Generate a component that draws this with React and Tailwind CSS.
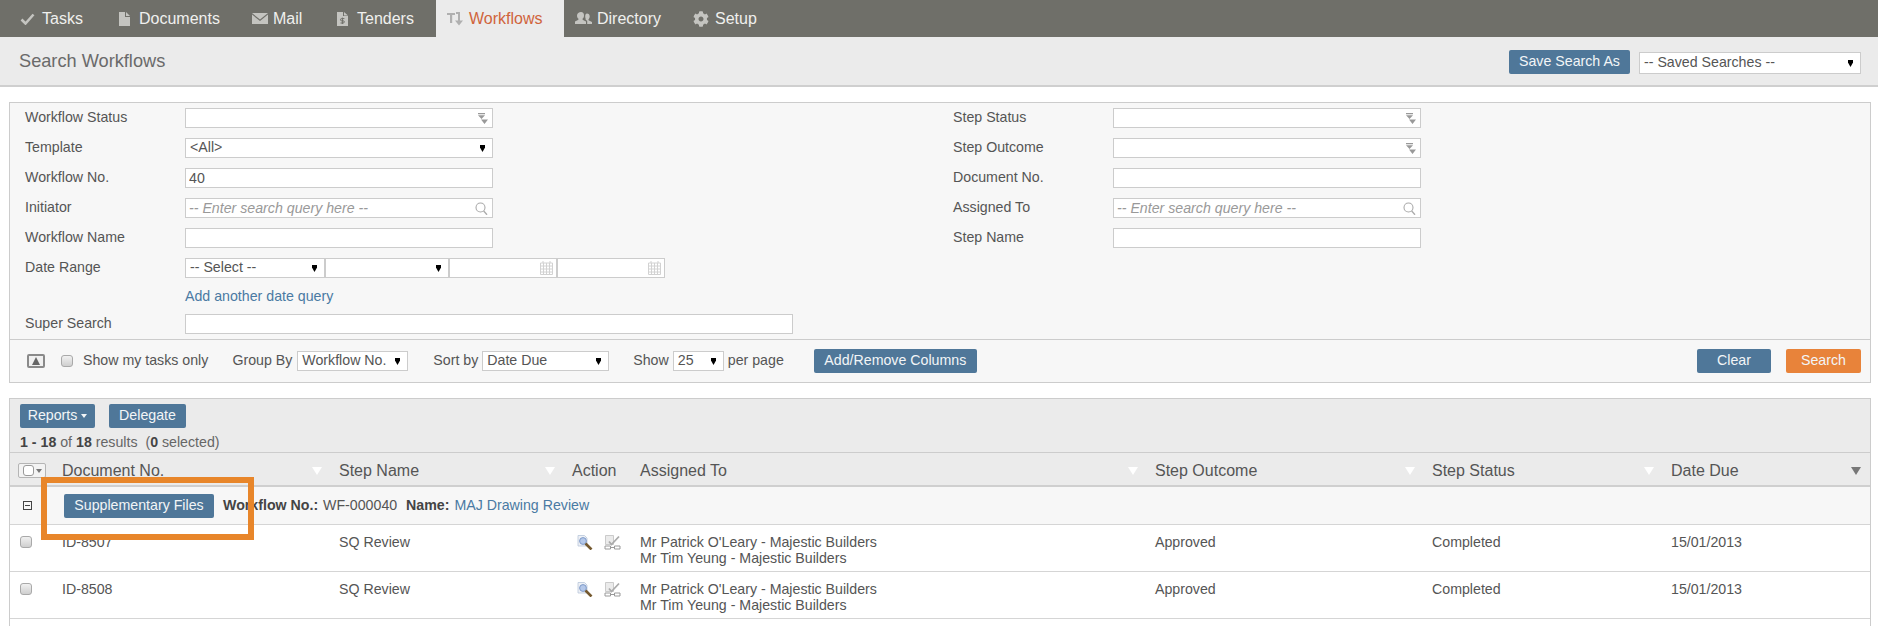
import { FaCog } from "react-icons/fa";

const tabs = [
  { name: "Tasks", icon: "check", width: "w-[99px]", gap: "gap-[7px]" },
  { name: "Documents", icon: "doc", width: "w-[133px]", gap: "gap-[9px]" },
  { name: "Mail", icon: "mail", width: "w-[85px]", gap: "gap-[5px]" },
  { name: "Tenders", icon: "tender", width: "w-[110px]", gap: "gap-[9px]" },
  { name: "Workflows", icon: "flow", width: "w-[128px]", gap: "gap-[6px]", active: true },
  { name: "Directory", icon: "people", width: "w-[118px]", gap: "gap-[5px]" },
  { name: "Setup", icon: "gear", width: "w-[95px]", gap: "gap-[6px]" },
];

function TabIcon({ type }) {
  if (type === "check")
    return (
      <svg width="15" height="12" viewBox="0 0 15 12" className="text-[#c4c4c0]">
        <path d="M1.5 6.5 5.5 10.5 13.5 1.5" fill="none" stroke="currentColor" strokeWidth="2.6" />
      </svg>
    );
  if (type === "doc")
    return (
      <svg width="11" height="14" viewBox="0 0 11 14" className="text-[#c4c4c0]">
        <path d="M0 0h6v5h5v9H0z M7 0l4 4H7z" fill="currentColor" />
      </svg>
    );
  if (type === "mail")
    return (
      <svg width="16" height="11" viewBox="0 0 16 11" className="text-[#c4c4c0]">
        <path d="M0 0h16L8 6.5z M0 1.6 8 8l8-6.4V11H0z" fill="currentColor" />
      </svg>
    );
  if (type === "tender")
    return (
      <svg width="11" height="14" viewBox="0 0 11 14" className="text-[#c4c4c0]">
        <path d="M0 0h6v4h5v10H0z M7 0l4 3.4H7z" fill="currentColor" />
        <path d="M7.4 6.6H4.6a1 1 0 0 0 0 2.2h1.6a1 1 0 0 1 0 2.2H3.5M5.4 5.6v6.4" fill="none" stroke="#6f6f69" strokeWidth="1" />
      </svg>
    );
  if (type === "flow")
    return (
      <svg width="16" height="15" viewBox="0 0 16 15" className="text-[#b0b0b0]">
        <path d="M0 2h8v2H5.2v8H3V4H0z M9 1h4v8.500h3L12 14.500l-4-5h3V3H9z" fill="currentColor" />
      </svg>
    );
  if (type === "people")
    return (
      <svg width="17" height="13" viewBox="0 0 17 13" className="text-[#c4c4c0]">
        <path d="M6 0c2 0 3 1.5 3 3.4 0 1.4-.6 2.6-1.4 3.2v1.2l3.4 1.7V12H0V9.500l3.400-1.700V6.600C2.600 6 2 4.800 2 3.400 2 1.500 4 0 6 0z" fill="currentColor" />
        <path d="M12 1.500c1.700 0 2.700 1.300 2.700 3 0 1.200-.5 2.200-1.200 2.800v1l3.500 1.700V12h-4.800V8.800l-1.500-.8V6.900c-.3-.600-.5-1.500-.5-2.400 0-1.700.6-3 1.800-3z" fill="currentColor" />
      </svg>
    );
  return <FaCog className="text-[#c4c4c0] w-[16px] h-[16px]" />;
}

function Arrow({ className = "text-black" }) {
  return (
    <svg width="5" height="7" viewBox="0 0 5 7" className={className}>
      <path d="M0 0h5v2.500L2.500 7 0 2.500z" fill="currentColor" />
    </svg>
  );
}

function SortArrow({ className = "text-white" }) {
  return (
    <svg width="10" height="8" viewBox="0 0 10 8" className={className}>
      <path d="M0 0h10L5 8z" fill="currentColor" />
    </svg>
  );
}

function TextBox({ value = "", placeholder, className = "w-[308px]", children }) {
  return (
    <div className={`relative h-[20px] ${className}`}>
      <input
        readOnly
        value={value}
        placeholder={placeholder}
        className="w-full h-full bg-white border border-[#cccccc] px-[3px] text-[14.2px] text-[#555] outline-none placeholder:italic placeholder:text-[#999]"
      />
      {children}
    </div>
  );
}

function Dropdown({ value, className = "w-[308px]", arrowRight = "pr-[7px]" }) {
  return (
    <div className={`h-[20px] bg-white border border-[#cccccc] flex items-center justify-between pl-[4px] ${arrowRight} text-[14.2px] text-[#555] ${className}`}>
      <span className="whitespace-nowrap">{value}</span>
      <Arrow />
    </div>
  );
}

function MultiBox() {
  return (
    <TextBox>
      <svg width="10" height="11" viewBox="0 0 10 11" className="absolute right-[5px] top-[5px] text-[#999]">
        <path d="M0 0h7v1.200H0z M0 2.200h7L3.500 6z M3 6.500h7L6.500 11z" fill="currentColor" />
      </svg>
    </TextBox>
  );
}

function SearchBox() {
  return (
    <TextBox placeholder="-- Enter search query here --">
      <svg width="13" height="13" viewBox="0 0 13 13" className="absolute right-[5px] top-[4px] text-[#aaa]">
        <circle cx="5.500" cy="5.500" r="4.500" fill="none" stroke="currentColor" strokeWidth="1.100" />
        <path d="M8.700 9 12 12.800" stroke="currentColor" strokeWidth="1.300" />
      </svg>
    </TextBox>
  );
}

function DateBox({ className }) {
  return (
    <TextBox className={className}>
      <svg width="13" height="14" viewBox="0 0 13 14" className="absolute right-[4px] top-[3px] text-[#d2d2d2]">
        <path d="M3 0v2M10 0v2M.5 2h12v11.500H.5zM.5 5h12M.5 8h12M.5 11h12M3.500 2v11.500M6.500 2v11.500M9.500 2v11.500" fill="none" stroke="currentColor" strokeWidth="1" />
      </svg>
    </TextBox>
  );
}

function FieldRow({ label, children }) {
  return (
    <div className="flex items-center h-[20px]">
      <span className="w-[160px] whitespace-nowrap">{label}</span>
      {children}
    </div>
  );
}

function Btn({ children, className = "bg-[#4f7799] px-[10px]" }) {
  return (
    <button className={`h-[24px] rounded-[2px] text-[#f2f5f7] text-[14.2px] whitespace-nowrap flex items-center justify-center ${className}`}>
      {children}
    </button>
  );
}

function Checkbox() {
  return <span className="block w-[12px] h-[12px] rounded-[3px] border border-[#a9a9a9] bg-gradient-to-b from-[#f1f1f1] to-[#cfcfcf]" />;
}

const headers = [
  { name: "Document No.", arrowPad: "pr-[17px]" },
  { name: "Step Name", arrowPad: "pr-[17px]" },
  { name: "Action" },
  { name: "Assigned To", arrowPad: "pr-[17px]" },
  { name: "Step Outcome", arrowPad: "pr-[17px]" },
  { name: "Step Status", arrowPad: "pr-[17px]" },
  { name: "Date Due", arrowPad: "pr-[9px]", dark: true },
];

const rows = [
  { id: "ID-8507" },
  { id: "ID-8508" },
];

const tableCols = "grid grid-cols-[52px_277px_233px_68px_515px_277px_239px_1fr]";

function RowIcons() {
  return (
    <div className="flex gap-[11px] pt-[1px]">
      <svg width="16" height="15" viewBox="0 0 16 15">
        <path d="M1 .5h6.500l2.500 2.500v8H1z" fill="#eef1f6" stroke="#b9c6da" strokeWidth="0.800" />
        <circle cx="6" cy="6" r="3.400" fill="#b4c8ea" stroke="#7f9ac8" strokeWidth="1" />
        <path d="M8.500 8.500 14.500 14.500" stroke="#75592f" strokeWidth="2.600" />
      </svg>
      <svg width="17" height="15" viewBox="0 0 17 15">
        <path d="M1.500.500h8v9h-8z" fill="#ebebeb" stroke="#cbcbcb" />
        <path d="M5 6.500 7.500 9.500 15 1.500" fill="none" stroke="#ababab" strokeWidth="1.800" />
        <path d="M1 11h5.500v3H1zM10.500 11H16v3h-5.500zM6.500 12.500h4" fill="none" stroke="#9a9a9a" strokeWidth="1" />
      </svg>
    </div>
  );
}

export default function App() {
  return (
    <div className="w-[1878px] h-[626px] overflow-hidden bg-white text-[14.2px] text-[#555] font-['Liberation_Sans',Arial,sans-serif]">
      {/* Nav */}
      <div className="h-[37px] bg-[#6f6f69] flex pl-[9px]">
        {tabs.map((t) => (
          <div
            key={t.name}
            className={`${t.width} ${t.gap} pl-[11px] flex items-center text-[16px] ${t.active ? "bg-[#ebebeb] text-[#d0643c]" : "text-[#f0f0ee]"}`}
          >
            <TabIcon type={t.icon} />
            <span>{t.name}</span>
          </div>
        ))}
      </div>

      {/* Title bar */}
      <div className="h-[50px] bg-[#ebebeb] border-b-2 border-[#cfcfcf] flex items-center pl-[19px] pr-[17px]">
        <h1 className="mt-[2px] text-[18.2px] text-[#6a6a6a]">Search Workflows</h1>
        <Btn className="ml-auto mt-[2px] bg-[#4f7799] w-[121px]">Save Search As</Btn>
        <Dropdown value="-- Saved Searches --" className="ml-[9px] w-[222px] !h-[22px] mt-[4px]" />
      </div>

      {/* Search panel */}
      <div className="mt-[15px] ml-[9px] w-[1862px] h-[281px] border border-[#cccccc] bg-[#f7f7f7]">
        <div className="h-[237px] pt-[5px] pl-[15px] grid grid-cols-[928px_1fr] border-b border-[#cccccc]">
          <div className="flex flex-col gap-[10px]">
            <FieldRow label="Workflow Status"><MultiBox /></FieldRow>
            <FieldRow label="Template"><Dropdown value="<All>" /></FieldRow>
            <FieldRow label="Workflow No."><TextBox value="40" /></FieldRow>
            <FieldRow label="Initiator"><SearchBox /></FieldRow>
            <FieldRow label="Workflow Name"><TextBox /></FieldRow>
            <FieldRow label="Date Range">
              <Dropdown value="-- Select --" className="w-[140px]" />
              <Dropdown value="" className="w-[124px]" />
              <DateBox className="w-[108px]" />
              <DateBox className="w-[108px]" />
            </FieldRow>
            <div className="h-[16px] ml-[160px] text-[#4a7aa3] leading-[16px] whitespace-nowrap">Add another date query</div>
            <FieldRow label="Super Search"><TextBox className="w-[608px]" /></FieldRow>
          </div>
          <div className="flex flex-col gap-[10px]">
            <FieldRow label="Step Status"><MultiBox /></FieldRow>
            <FieldRow label="Step Outcome"><MultiBox /></FieldRow>
            <FieldRow label="Document No."><TextBox /></FieldRow>
            <FieldRow label="Assigned To"><SearchBox /></FieldRow>
            <FieldRow label="Step Name"><TextBox /></FieldRow>
          </div>
        </div>
        <div className="h-[42px] flex items-center pl-[17px] pr-[9px]">
          <span className="w-[18px] h-[14px] border-2 border-[#8a8a8a] rounded-[2px] bg-[#f0f0f0] flex items-center justify-center">
            <svg width="8" height="8" viewBox="0 0 8 8" className="text-[#666]"><path d="M4 0l4 8H0z" fill="currentColor" /></svg>
          </span>
          <span className="ml-[16px]"><Checkbox /></span>
          <span className="ml-[10px]">Show my tasks only</span>
          <span className="ml-[24px]">Group By</span>
          <Dropdown value="Workflow No." className="ml-[5px] w-[111px]" />
          <span className="ml-[25px]">Sort by</span>
          <Dropdown value="Date Due" className="ml-[4px] w-[127px]" />
          <span className="ml-[24px]">Show</span>
          <Dropdown value="25" className="ml-[4px] w-[51px]" />
          <span className="ml-[4px]">per page</span>
          <Btn className="ml-[30px] bg-[#4f7799] w-[163px]">Add/Remove Columns</Btn>
          <Btn className="ml-auto bg-[#4f7799] w-[74px]">Clear</Btn>
          <Btn className="ml-[15px] bg-[#e8833a] w-[75px]">Search</Btn>
        </div>
      </div>

      {/* Results */}
      <div className="relative mt-[15px] ml-[9px] w-[1862px] h-[240px] border border-[#cccccc]">
        <div className="h-[54px] bg-[#ebebeb] pl-[10px] pt-[5px] border-b border-[#cccccc]">
          <div className="flex gap-[14px]">
            <Btn className="bg-[#4f7799] w-[75px] gap-[4px]">
              Reports
              <svg width="6" height="4" viewBox="0 0 6 4" className="text-[#f2f5f7]"><path d="M0 0h6L3 4z" fill="currentColor" /></svg>
            </Btn>
            <Btn className="bg-[#4f7799] w-[77px]">Delegate</Btn>
          </div>
          <p className="mt-[6px] leading-[16px] whitespace-pre text-[#666]">
            <b className="text-[#444]">1 - 18</b> of <b className="text-[#444]">18</b> results  (<b className="text-[#444]">0</b> selected)
          </p>
        </div>

        <div className={`${tableCols} h-[34px] pt-[3px] bg-[#ebebeb] border-b-2 border-[#cfcfcf] text-[16px] items-center`}>
          <div className="pl-[8px]">
            <span className="w-[28px] h-[15px] flex items-center justify-center gap-[2px] border border-[#b5b5b5] rounded-[2px] bg-[#f3f3f3]">
              <span className="w-[11px] h-[11px] rounded-[3px] border border-[#9a9a9a] bg-white" />
              <svg width="6" height="4" viewBox="0 0 6 4" className="text-[#777]"><path d="M0 0h6L3 4z" fill="currentColor" /></svg>
            </span>
          </div>
          {headers.map((h) => (
            <div key={h.name} className={`flex items-center justify-between ${h.arrowPad ?? ""}`}>
              <span className="whitespace-nowrap">{h.name}</span>
              {h.arrowPad && <SortArrow className={h.dark ? "text-[#777]" : "text-white"} />}
            </div>
          ))}
        </div>

        <div className="h-[38px] bg-[#f7f7f7] border-b border-[#d5d5d5] flex items-center">
          <span className="ml-[13px] w-[9px] h-[9px] border border-[#444] flex items-center justify-center">
            <span className="block w-[5px] h-[1px] bg-[#444]" />
          </span>
          <Btn className="ml-[32px] bg-[#4f7799] w-[150px]">Supplementary Files</Btn>
          <span className="ml-[9px] whitespace-pre">
            <b className="text-[#444]">Workflow No.:</b><span className="ml-[1px]"> WF-000040</span><b className="ml-[1px] text-[#444]">  Name:</b> <span className="ml-[1px] text-[#4a7aa3]">MAJ Drawing Review</span>
          </span>
        </div>

        {rows.map((r) => (
          <div key={r.id} className={`${tableCols} h-[47px] border-b border-[#d5d5d5] pt-[9px] leading-[16px]`}>
            <div className="pl-[10px] pt-[2px]"><Checkbox /></div>
            <div>{r.id}</div>
            <div>SQ Review</div>
            <div className="pl-[5px]"><RowIcons /></div>
            <div>
              <div>Mr Patrick O'Leary - Majestic Builders</div>
              <div>Mr Tim Yeung - Majestic Builders</div>
            </div>
            <div>Approved</div>
            <div>Completed</div>
            <div>15/01/2013</div>
          </div>
        ))}

        {/* Orange highlight box */}
        <div className="absolute left-[31px] top-[78px] w-[213px] h-[63px] border-[6px] border-[#e8862a]" />
      </div>
    </div>
  );
}
